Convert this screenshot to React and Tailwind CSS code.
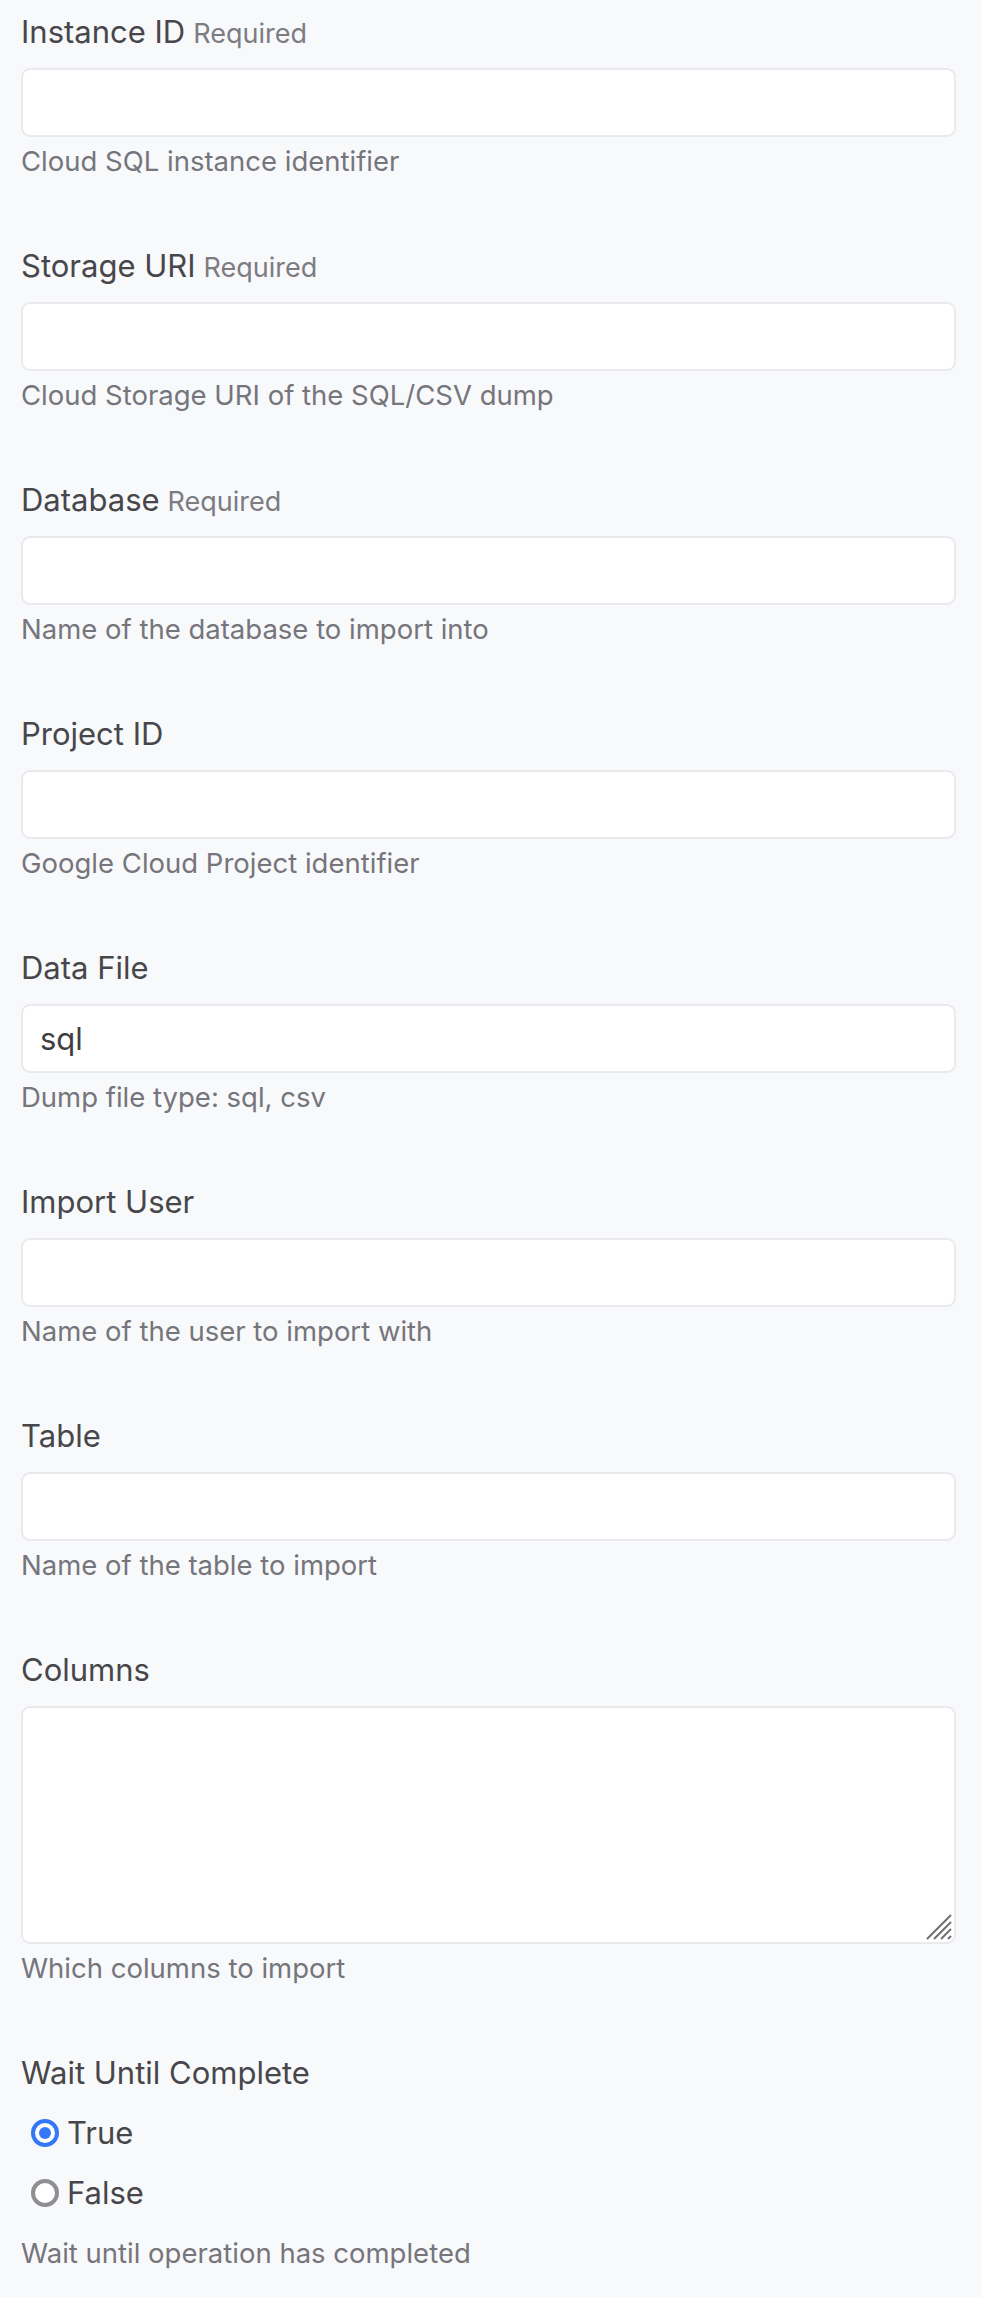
import { useState } from "react";

const fields = [
  { label: "Instance ID", required: true, help: "Cloud SQL instance identifier" },
  { label: "Storage URI", required: true, help: "Cloud Storage URI of the SQL/CSV dump" },
  { label: "Database", required: true, help: "Name of the database to import into" },
  { label: "Project ID", help: "Google Cloud Project identifier" },
  { label: "Data File", value: "sql", help: "Dump file type: sql, csv" },
  { label: "Import User", help: "Name of the user to import with" },
  { label: "Table", help: "Name of the table to import" },
];

function Label({ children, required }) {
  return (
    <div className="flex h-[36px] items-baseline text-[31px] leading-[36px] text-[#47474b]">
      {children}
      {required && <span className="ml-[8px] text-[27px] leading-[36px] text-[#7c7c82]">Required</span>}
    </div>
  );
}

function Help({ children }) {
  return <div className="mt-[7px] h-[34px] text-[27.5px] leading-[34px] text-[#75757b]">{children}</div>;
}

export default function App() {
  const [values, setValues] = useState(() => {
    const v = {};
    fields.forEach((f) => (v[f.label] = f.value || ""));
    return v;
  });
  const [columns, setColumns] = useState("");
  const [wait, setWait] = useState(true);

  return (
    <div
      className="min-h-screen bg-[#f8f9fb] pt-[14px] pl-[21px] pr-[26px] pb-[30px]"
      style={{ fontFamily: "Inter, 'Noto Sans', sans-serif" }}
    >
      {fields.map((f) => (
        <div key={f.label} className="mb-[70px]">
          <Label required={f.required}>{f.label}</Label>
          <input
            type="text"
            value={values[f.label]}
            onChange={(e) => setValues({ ...values, [f.label]: e.target.value })}
            className="mt-[18px] block h-[69px] w-full rounded-[9px] border-2 border-[#e9e9ee] bg-white px-[17px] text-[31px] text-[#3f3f43] outline-none"
          />
          <Help>{f.help}</Help>
        </div>
      ))}

      {/* COLUMNS */}
      <div className="mb-[70px]">
        <Label>Columns</Label>
        <div className="relative mt-[18px]">
          <textarea
            value={columns}
            onChange={(e) => setColumns(e.target.value)}
            className="block h-[238px] w-full resize-none rounded-[9px] border-2 border-[#e9e9ee] bg-white px-[17px] py-[12px] text-[31px] text-[#3f3f43] outline-none"
          />
          {/* resize grip */}
          <svg
            className="pointer-events-none absolute right-[4px] bottom-[4px]"
            width="26"
            height="26"
            viewBox="0 0 26 26"
            fill="none"
            stroke="#6f6f6f"
            strokeWidth="2"
          >
            <path d="M1 25 L25 1" />
            <path d="M8 25 L25 8" />
            <path d="M15 25 L25 15" />
            <path d="M22 25 L25 22" />
          </svg>
        </div>
        <Help>Which columns to import</Help>
      </div>

      {/* WAIT UNTIL COMPLETE */}
      <div>
        <Label>Wait Until Complete</Label>
        <div className="mt-[12px]">
          {[true, false].map((opt) => (
            <label key={String(opt)} className="flex h-[60px] cursor-pointer items-center pl-[10px]">
              <span
                onClick={() => setWait(opt)}
                className={
                  wait === opt
                    ? "flex h-[28px] w-[28px] items-center justify-center rounded-full border-[4px] border-[#3478f6] bg-white"
                    : "flex h-[28px] w-[28px] items-center justify-center rounded-full border-[4px] border-[#8e8e93] bg-white"
                }
              >
                {wait === opt && <span className="h-[12px] w-[12px] rounded-full bg-[#3478f6]" />}
              </span>
              <span onClick={() => setWait(opt)} className="ml-[8px] text-[31px] leading-[36px] text-[#47474b]">
                {opt ? "True" : "False"}
              </span>
            </label>
          ))}
        </div>
        <div className="mt-[13px] text-[27.5px] leading-[34px] text-[#75757b]">Wait until operation has completed</div>
      </div>
    </div>
  );
}
